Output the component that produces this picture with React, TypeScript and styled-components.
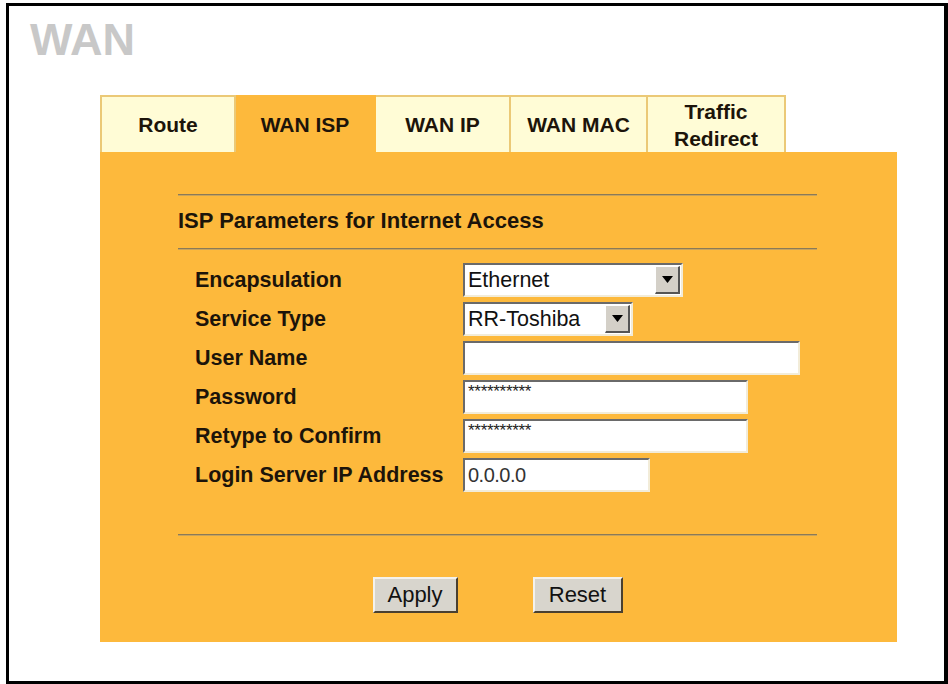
import React from 'react';
import styled, { createGlobalStyle } from 'styled-components';

const GlobalStyle = createGlobalStyle`
  html, body {
    margin: 0;
    padding: 0;
    background: #ffffff;
    overflow: hidden;
  }
  body {
    font-family: "Liberation Sans", Arial, sans-serif;
  }
`;

const ORANGE = '#fdb93c';
const TAN = '#ebc977';
const INK = '#1c140a';

const Frame = styled.div`
  box-sizing: border-box;
  width: 942px;
  height: 681px;
  margin: 3px 0 0 6px;
  border: 3px solid #000;
  border-right-width: 4px;
  background: #fff;
  padding: 11px 0 0 21px;
`;

const Title = styled.h1`
  margin: 0;
  font-size: 45px;
  line-height: 45px;
  font-weight: bold;
  color: #c8c8c8;
`;

const Panel = styled.div`
  width: 797px;
  margin: 33px 0 0 70px;
`;

const TabRow = styled.div`
  display: flex;
  height: 57px;
`;

const Tab = styled.div<{ $w: number; $active?: boolean; $first?: boolean }>`
  box-sizing: border-box;
  width: ${p => p.$w}px;
  display: flex;
  align-items: center;
  justify-content: center;
  text-align: center;
  white-space: pre-line;
  font-size: 21px;
  line-height: 27px;
  font-weight: bold;
  color: ${INK};
  background: ${p => (p.$active ? ORANGE : '#fffcd6')};
  border-top: 2px solid ${p => (p.$active ? ORANGE : TAN)};
  border-right: 2px solid ${p => (p.$active ? ORANGE : TAN)};
  border-left: ${p => (p.$first ? `2px solid ${TAN}` : 'none')};
`;

const Body = styled.div`
  box-sizing: border-box;
  height: 490px;
  background: ${ORANGE};
  padding: 42px 80px 29px 78px;
`;

const Rule = styled.div<{ $mt?: number }>`
  height: 0;
  margin-top: ${p => p.$mt ?? 0}px;
  border-top: 1px solid #8a7a58;
  border-bottom: 1px solid #c9a35a;
`;

const Heading = styled.h2`
  margin: 12px 0 14px;
  font-size: 22px;
  line-height: 26px;
  font-weight: bold;
  color: ${INK};
`;

const Form = styled.div`
  display: grid;
  grid-template-columns: 268px auto;
  grid-auto-rows: 34px;
  row-gap: 5px;
  align-items: center;
  margin-top: 13px;
  padding-left: 17px;
`;

const Label = styled.div`
  font-size: 21.5px;
  font-weight: bold;
  color: ${INK};
  white-space: nowrap;
`;

const Sunken = styled.div<{ $w: number }>`
  box-sizing: border-box;
  width: ${p => p.$w}px;
  height: 34px;
  display: flex;
  align-items: center;
  background: #fff;
  border-top: 2px solid #6a6a6a;
  border-left: 2px solid #6a6a6a;
  border-bottom: 2px solid #f2ecd9;
  border-right: 2px solid #f2ecd9;
  font-size: 21.5px;
  color: #111;
  padding-left: 3px;
  overflow: hidden;
`;

const SelectText = styled.span`
  flex: 1;
  white-space: nowrap;
`;

const ArrowButton = styled.span`
  box-sizing: border-box;
  width: 25px;
  height: 28px;
  margin-right: 1px;
  display: flex;
  align-items: center;
  justify-content: center;
  background: #d4d0c8;
  border-top: 1px solid #fff;
  border-left: 1px solid #fff;
  border-bottom: 2px solid #555;
  border-right: 2px solid #555;
`;

const Stars = styled.span`
  align-self: flex-start;
  margin-top: 3px;
  font-size: 17px;
  letter-spacing: -0.3px;
  line-height: 14px;
  color: #222;
`;

const IpText = styled.span`
  font-size: 20px;
  letter-spacing: -0.5px;
  color: #333;
`;

const ButtonRow = styled.div`
  display: flex;
  justify-content: center;
  gap: 75px;
  margin-top: 41px;
`;

const Button = styled.button<{ $w: number }>`
  box-sizing: border-box;
  width: ${p => p.$w}px;
  height: 36px;
  padding: 0;
  background: #d8d5cd;
  border-top: 2px solid #f4f2ec;
  border-left: 2px solid #f4f2ec;
  border-bottom: 2px solid #4a4030;
  border-right: 2px solid #4a4030;
  font-family: "Liberation Sans", Arial, sans-serif;
  font-size: 22px;
  color: #111;
`;

const Select = ({ w, value }: { w: number; value: string }) => (
  <Sunken $w={w}>
    <SelectText>{value}</SelectText>
    <ArrowButton>
      <svg width="11" height="7" viewBox="0 0 11 7">
        <path d="M0 0H11L5.5 7Z" fill="#000" />
      </svg>
    </ArrowButton>
  </Sunken>
);

const tabs = [
  { label: 'Route', w: 136 },
  { label: 'WAN ISP', w: 140, active: true },
  { label: 'WAN IP', w: 135 },
  { label: 'WAN MAC', w: 137 },
  { label: 'Traffic\nRedirect', w: 138 },
];

export default function App() {
  return (
    <>
      <GlobalStyle />
      <Frame>
        <Title>WAN</Title>
        <Panel>
          <TabRow>
            {tabs.map((t, i) => (
              <Tab key={t.label} $w={t.w} $active={t.active} $first={i === 0}>
                {t.label}
              </Tab>
            ))}
          </TabRow>
          <Body>
            <Rule />
            <Heading>ISP Parameters for Internet Access</Heading>
            <Rule />
            <Form>
              <Label>Encapsulation</Label>
              <Select w={220} value="Ethernet" />
              <Label>Service Type</Label>
              <Select w={170} value="RR-Toshiba" />
              <Label>User Name</Label>
              <Sunken $w={337} />
              <Label>Password</Label>
              <Sunken $w={285}>
                <Stars>**********</Stars>
              </Sunken>
              <Label>Retype to Confirm</Label>
              <Sunken $w={285}>
                <Stars>**********</Stars>
              </Sunken>
              <Label>Login Server IP Address</Label>
              <Sunken $w={187}>
                <IpText>0.0.0.0</IpText>
              </Sunken>
            </Form>
            <Rule $mt={42} />
            <ButtonRow>
              <Button $w={85}>Apply</Button>
              <Button $w={90}>Reset</Button>
            </ButtonRow>
          </Body>
        </Panel>
      </Frame>
    </>
  );
}
